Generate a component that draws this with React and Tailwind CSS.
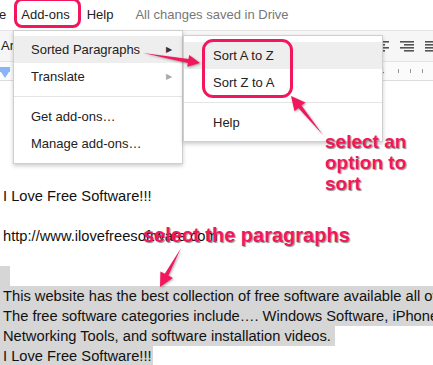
import React from 'react';

const PINK = '#f2175d';

const MenuItem = ({ label, active, arrow, dim, pl = 'pl-[17px]' }) => (
  <div className={`h-[27px] flex items-center ${pl} pr-3 text-[13px] text-[#222] ${active ? 'bg-[#eeeeee]' : ''}`}>
    <span className="flex-1">{label}</span>
    {arrow && (
      <span className={`text-[8px] mr-[-2px] ${dim ? 'text-[#aaa]' : 'text-[#333]'}`}>▶</span>
    )}
  </div>
);

const Sep = () => <div className="my-[6px] h-px bg-[#e5e5e5]" />;

const AlignIcon = ({ right }) => (
  <svg width="14" height="11" viewBox="0 0 14 11" className="shrink-0">
    {[0, 3, 6, 9].map((y, i) => {
      const w = i % 2 === 0 ? 14 : 10;
      const x = right ? 14 - w : 0;
      return <rect key={y} x={x} y={y} width={w} height="1.6" fill="#555" />;
    })}
  </svg>
);

const App = () => {
  return (
    <div className="relative w-[433px] h-[365px] overflow-hidden bg-white font-['Liberation_Sans',Arial,sans-serif]">
      {/* menu bar */}
      <div className="h-[31px] flex items-center border-b border-[#e5e5e5] text-[13px] text-[#222] whitespace-nowrap">
        <span className="ml-[-1px]">e</span>
        <span className="relative ml-[15px]">
          Add-ons
          <span className="absolute left-[-7px] top-[-7px] w-[67px] h-[30px] border-[3px] border-[#f2175d] rounded-[8px]" />
        </span>
        <span className="ml-[17px]">Help</span>
        <span className="ml-[22px] text-[#777]">All changes saved in Drive</span>
      </div>

      {/* toolbar */}
      <div className="h-[31px] flex items-center bg-[#f6f6f6] border-b border-[#e2e2e2] text-[13px] text-[#222]">
        <span className="ml-px">Ari</span>
        <div className="ml-auto flex items-center gap-[11px] mr-[-6px]">
          <AlignIcon />
          <AlignIcon right />
          <AlignIcon />
        </div>
      </div>

      {/* ruler */}
      <div className="relative h-[19px] bg-[#fbfbfb] border-b border-[#dcdcdc] flex items-center">
        <div className="absolute left-0 top-[5px] w-[10px] h-[5px] bg-[#8ab4f8]" />
        <div className="absolute left-[1px] top-[10px] w-0 h-0 border-l-[4px] border-r-[4px] border-t-[6px] border-l-transparent border-r-transparent border-t-[#8ab4f8]" />
        <div className="ml-auto flex items-center gap-[11px] mr-[10px] text-[10px] text-[#666]">
          <span className="mr-[3px]">4</span>
          <span className="w-px h-[4px] bg-[#999]" />
          <span className="w-px h-[4px] bg-[#999]" />
          <span className="w-px h-[4px] bg-[#999]" />
        </div>
      </div>

      {/* document */}
      <div className="pt-[105px] text-[14.7px] leading-5 text-[#111] whitespace-nowrap">
        <div className="pl-[3px]">I Love Free Software!!!</div>
        <div className="h-5" />
        <div className="pl-[3px]">http://www.ilovefreesoftware.com</div>
        <div className="h-5" />
        <div className="h-5 w-[10px] bg-[#d6d6d6]" />
        <div className="bg-[#d6d6d6] pl-[3px]">This website has the best collection of free software available all over the web.</div>
        <div><span className="inline-block bg-[#d6d6d6] pl-[3px] pr-[20px]">The free software categories include…. Windows Software, iPhone Apps,</span></div>
        <div><span className="inline-block bg-[#d6d6d6] pl-[3px] pr-[4px]">Networking Tools, and software installation videos. </span></div>
        <div><span className="inline-block bg-[#d6d6d6] pl-[3px] pr-[1px]">I Love Free Software!!!</span></div>
      </div>

      {/* Add-ons menu */}
      <div className="absolute left-[13px] top-[30px] w-[170px] pt-[5px] pb-[6px] bg-white border border-[#cfcfcf] shadow-[0_2px_4px_rgba(0,0,0,0.2)]">
        <MenuItem label="Sorted Paragraphs" active arrow />
        <MenuItem label="Translate" arrow dim />
        <Sep />
        <MenuItem label="Get add-ons…" />
        <MenuItem label="Manage add-ons…" />
      </div>

      {/* submenu */}
      <div className="absolute left-[183px] top-[35px] w-[200px] pt-[6px] pb-[5px] bg-white border border-[#cfcfcf] shadow-[0_2px_4px_rgba(0,0,0,0.2)]">
        <MenuItem label="Sort A to Z" active pl="pl-[29px]" />
        <MenuItem label="Sort Z to A" pl="pl-[29px]" />
        <Sep />
        <MenuItem label="Help" pl="pl-[29px]" />
      </div>

      {/* highlight box around sort options */}
      <div className="absolute left-[202px] top-[39px] w-[91px] h-[59px] border-[3px] border-[#f2175d] rounded-[11px]" />

      {/* arrows */}
      <svg className="absolute inset-0 pointer-events-none" width="433" height="365" style={{ filter: 'drop-shadow(1px 1px 1px rgba(0,0,0,0.35))' }}>
        <polygon fill={PINK} points="143,53 188.5,58.9 189.2,55 200,63 187.2,66.8 187.9,62.9" />
        <polygon fill={PINK} points="323,135 301.4,105.5 305.3,102.4 291,96 294.5,111.2 298.4,108.1" />
        <polygon fill={PINK} points="181,248 168.4,275.6 172.8,278 160,287 160.4,271.4 164.8,273.8" />
      </svg>

      {/* annotations */}
      <div className="absolute left-[325px] top-[131px] text-[19px] leading-[21px] font-bold text-[#f2175d] [text-shadow:1px_1px_1px_rgba(0,0,0,0.45)]">
        select an<br />option to<br />sort
      </div>
      <div className="absolute left-[143px] top-[224px] text-[20px] leading-[22px] font-bold text-[#f2175d] whitespace-nowrap [text-shadow:1px_1px_1px_rgba(0,0,0,0.45)]">
        select the paragraphs
      </div>
    </div>
  );
};

export default App;
